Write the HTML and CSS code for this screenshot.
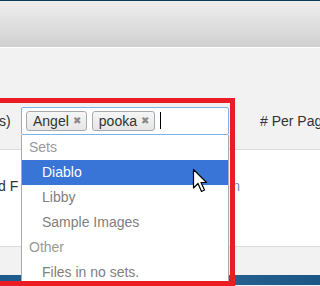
FILE: index.html
```html
<!DOCTYPE html>
<html lang="en">
<head>
    <meta charset="UTF-8">
    <title>Filter by sets</title>
    <link rel="stylesheet" href="styles.css">
</head>
<body>
    <!-- top band -->
    <div class="top-strip"></div>
    <div class="header"></div>

    <!-- toolbar with the set picker -->
    <div class="toolbar">
        <span class="label-left">s)</span>
        <div class="chosen">
            <ul class="choices">
                <li class="choice">Angel <span class="close">&#x2716;</span></li>
                <li class="choice">pooka <span class="close">&#x2716;</span></li>
                <li class="caret"></li>
            </ul>
            <ul class="drop">
                <li class="group">Sets</li>
                <li class="option active">Diablo</li>
                <li class="option">Libby</li>
                <li class="option">Sample Images</li>
                <li class="group">Other</li>
                <li class="option">Files in no sets.</li>
            </ul>
        </div>
        <span class="label-right"># Per Page</span>
    </div>

    <div class="content">
        <div class="row">
            <span class="row-text">d F</span>
            <span class="row-link">n</span>
        </div>
    </div>

    <div class="footer"></div>
    <div class="bottom-strip"></div>

    <!-- annotation and pointer over the page -->
    <div class="highlight-box"></div>
    <svg class="pointer" width="16" height="26" viewBox="0 0 16 26">
        <path d="M1.5 1.5 V20 L6 15.5 L9.5 23.5 L12.5 22 L9 14.5 H14.5 Z" fill="#fff" stroke="#000" stroke-width="1.2" stroke-linejoin="round"/>
    </svg>
</body>
</html>
```

FILE: styles.css
```css
/* page */
body {
    font-family: "Liberation Sans", Arial, sans-serif;
    font-size: 13px;
    margin: 0;
    padding: 0;
    background-color: #f2f2f2;
    overflow: hidden;
    height: 286px;
    position: relative;
}

ul {
    list-style: none;
    margin: 0;
    padding: 0;
}

.top-strip {
    height: 1px;
    background-color: #0c3a5c;
}

.header {
    height: 46px;
    background: linear-gradient(#eeeeee, #d0d0d0);
    border-bottom: 1px solid #fff;
}

.toolbar {
    display: flex;
    align-items: center;
    height: 102px;
    box-sizing: border-box;
    padding-top: 59px;
    padding-bottom: 15px;
    border-bottom: 1px solid #dcdcdc;
    color: #333;
    font-size: 14px;
}

.label-left {
    flex-shrink: 0;
    width: 11px;
    margin-left: -1px;
    margin-right: 11px;
}

.label-right {
    margin-left: 31px;
    white-space: nowrap;
}

/* chosen style multi select */
.chosen {
    position: relative;
    flex-shrink: 0;
    width: 208px;
    height: 28px;
}

.choices {
    display: flex;
    align-items: center;
    height: 28px;
    box-sizing: border-box;
    padding: 0 4px;
    background-color: #fff;
    border: 1px solid #7db3ea;
    border-radius: 2px;
}

.choice {
    display: flex;
    align-items: center;
    height: 20px;
    box-sizing: border-box;
    padding: 0 5px 0 6px;
    margin-right: 5px;
    border: 1px solid #a9a9a9;
    border-radius: 3px;
    background: linear-gradient(#f6f6f6, #e6e6e6);
    color: #333;
    font-size: 14px;
}

.close {
    color: #8a8a8a;
    font-size: 10px;
    margin-left: 4px;
}

.caret {
    width: 1px;
    height: 17px;
    background-color: #000;
}

.drop {
    position: absolute;
    top: 28px;
    left: 0;
    width: 208px;
    height: 160px;
    box-sizing: border-box;
    background-color: #fff;
    border: 1px solid #aaa;
    border-top: none;
    z-index: 2;
}

.group {
    height: 25px;
    line-height: 25px;
    padding-left: 7px;
    color: #999;
    font-size: 14px;
}

.option {
    height: 25px;
    line-height: 25px;
    padding-left: 20px;
    color: #808080;
}

.option.active {
    background-color: #3875d7;
    color: #fff;
}

.content {
    height: 96px;
    background-color: #fff;
    border-bottom: 1px solid #dcdcdc;
}

.row {
    display: flex;
    padding-top: 28px;
    font-size: 14px;
}

.row-text {
    margin-left: -2px;
    color: #333;
}

.row-link {
    margin-left: 214px;
    color: #7d86b8;
}

.footer {
    height: 28px;
}

.bottom-strip {
    height: 10px;
    background: linear-gradient(90deg, #1c5b8b, #2a6a99, #1b5684);
}

.highlight-box {
    position: absolute;
    top: 98px;
    left: -10px;
    width: 235px;
    height: 178px;
    border: 5px solid #ec1c24;
    z-index: 3;
}

.pointer {
    position: absolute;
    left: 192px;
    top: 168px;
    z-index: 4;
}
```
